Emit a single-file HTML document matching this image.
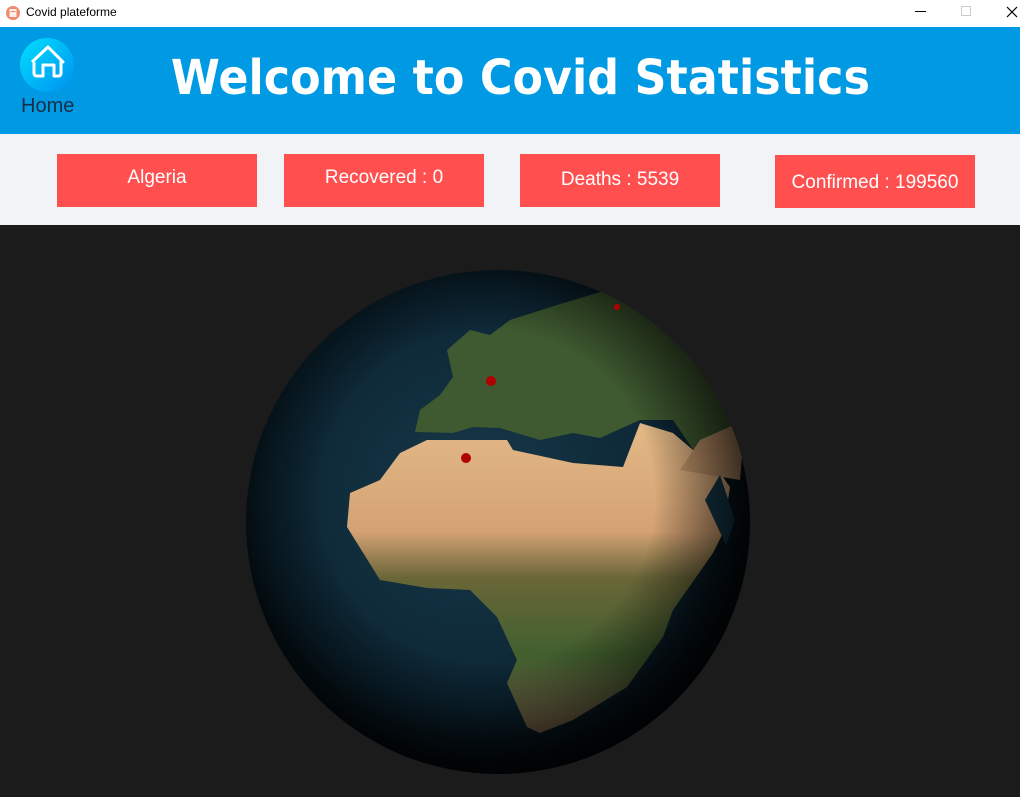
<!DOCTYPE html>
<html><head><meta charset="utf-8"><style>
*{margin:0;padding:0;box-sizing:border-box}
body{width:1020px;height:797px;overflow:hidden;background:#1b1b1b;font-family:"Liberation Sans",sans-serif;position:relative}
.tb{position:absolute;left:0;top:0;width:1020px;height:27px;background:#fff}
.tb .t{position:absolute;left:26px;top:5px;font-size:12px;color:#000}
.hd{position:absolute;left:0;top:27px;width:1020px;height:107px;background:#0099e4}
.band{position:absolute;left:0;top:134px;width:1020px;height:91px;background:#f2f3f7}
.btn{position:absolute;height:53px;width:200px;background:#ff4f4f;color:#fff;font-size:19px;text-align:center;font-family:"Liberation Sans",sans-serif}
h1{position:absolute;left:0;width:1040px;top:48px;text-align:center;color:#fff;font-family:"DejaVu Sans",sans-serif;font-weight:bold;font-size:48px;line-height:60px}
h1 span{display:inline-block;transform:scaleX(0.926)}
</style></head><body>
<div class="tb">
<svg style="position:absolute;left:5px;top:5px" width="16" height="16"><circle cx="8" cy="8" r="7" fill="#f08a6c"/><rect x="4.5" y="4" width="7" height="8" fill="#fff" opacity=".85"/><rect x="5.5" y="6" width="5" height="1" fill="#f08a6c"/></svg>
<div class="t">Covid plateforme</div>
<div style="position:absolute;left:915px;top:11px;width:11px;height:1px;background:#000"></div>
<div style="position:absolute;left:961px;top:6px;width:10px;height:10px;border:1px solid #ccc"></div>
<svg style="position:absolute;left:1006px;top:6px" width="12" height="12"><path d="M1 1L11 11M11 1L1 11" stroke="#000" stroke-width="1.2"/></svg>
</div>
<div class="hd">
<svg style="position:absolute;left:20px;top:11px" width="55" height="55" viewBox="0 0 55 55">
<defs><linearGradient id="g" x1="0" y1="0" x2="1" y2="1"><stop offset="0" stop-color="#00e0ff"/><stop offset="1" stop-color="#0090f0"/></linearGradient></defs>
<circle cx="27" cy="27" r="27" fill="url(#g)"/>
<path d="M12 24L28 9L43 24L41 24L41 35Q41 38 38 38L34 38L34 27L23 27L23 38L17 38Q14 38 14 35L14 24" fill="none" stroke="#fff" stroke-width="3" stroke-linejoin="round"/>
</svg>
<div style="position:absolute;left:21px;top:68px;font-size:20px;color:#1a2f45;font-family:'Liberation Sans',sans-serif">Home</div>
</div>
<h1><span>Welcome to Covid Statistics</span></h1>
<div class="band"></div>
<div class="btn" style="left:57px;top:154px;line-height:48px">Algeria</div>
<div class="btn" style="left:284px;top:154px;line-height:48px">Recovered : 0</div>
<div class="btn" style="left:520px;top:154px;line-height:52px">Deaths : 5539</div>
<div class="btn" style="left:775px;top:155px;line-height:55px">Confirmed : 199560</div>
<svg style="position:absolute;left:0;top:225px" width="1020" height="572" viewBox="0 225 1020 572">
<defs>
<radialGradient id="oc" cx="0.45" cy="0.45" r="0.6"><stop offset="0" stop-color="#17394a"/><stop offset="0.7" stop-color="#0c2533"/><stop offset="1" stop-color="#02070a"/></radialGradient>
<radialGradient id="sh" cx="0.48" cy="0.45" r="0.55"><stop offset="0.6" stop-color="#000" stop-opacity="0"/><stop offset="1" stop-color="#000" stop-opacity="0.85"/></radialGradient>
<linearGradient id="af" x1="0" y1="0" x2="0" y2="1"><stop offset="0" stop-color="#e3b986"/><stop offset="0.35" stop-color="#d4a274"/><stop offset="0.5" stop-color="#6a6638"/><stop offset="0.75" stop-color="#41602e"/><stop offset="1" stop-color="#80684e"/></linearGradient>
<clipPath id="c"><circle cx="498" cy="522" r="252"/></clipPath>
</defs>
<circle cx="498" cy="522" r="252" fill="url(#oc)"/>
<g clip-path="url(#c)">
<path d="M415 432L420 410L440 395L453 377L447 350L470 330L490 335L510 320L557 305L607 290L660 300L700 330L740 380L760 440L707 470L673 420L640 420L600 438L573 433L540 440L500 428L473 427L453 433Z" fill="#3f5a30"/>
<path d="M350 493L347 527L380 580L427 588L470 590L497 617L517 660L507 683L527 727L540 733L573 720L627 687L663 637L673 610L713 553L723 533L730 487L720 473L673 433L640 423L623 467L573 463L513 450L507 440L427 440L400 453L380 480Z" fill="url(#af)"/>
<path d="M680 470L740 480L745 420L700 440Z" fill="#c2956a"/>
<path d="M720 475L735 520L726 545L705 500Z" fill="#153848"/>
</g>
<circle cx="498" cy="522" r="252" fill="url(#sh)"/>
<circle cx="491" cy="381" r="5" fill="#b00000"/>
<circle cx="466" cy="458" r="5" fill="#b00000"/>
<circle cx="617" cy="307" r="3" fill="#b00000"/>
</svg>
</body></html>
